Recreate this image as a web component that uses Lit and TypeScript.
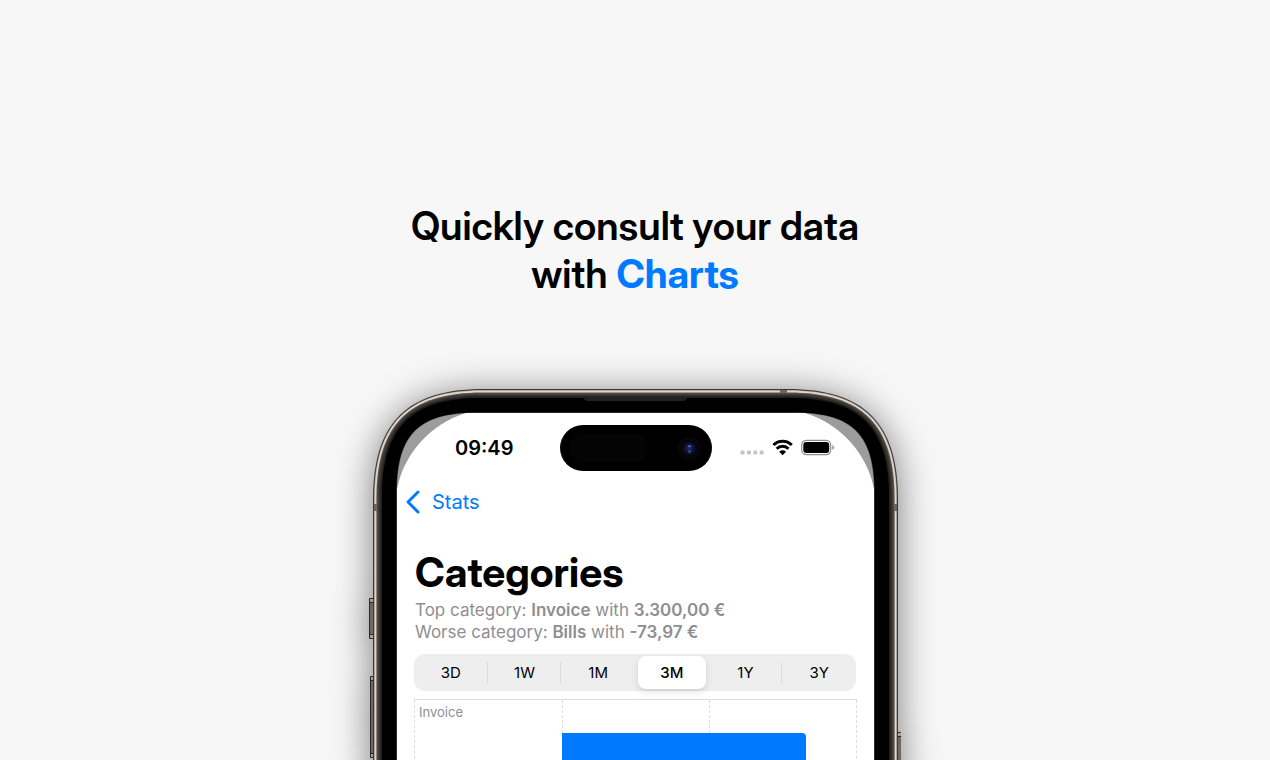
import { LitElement, html, svg, css } from "lit";
import { customElement, state, property } from "lit/decorators.js";
import { classMap } from "lit/directives/class-map.js";

const BODY_WIDTH = 526;
const BODY_HEIGHT = 1080;

/** Closed outline of the phone body, moved inwards by `inset`, with smooth corners. */
function outline(inset: number): string {
  const run = 110 - inset * 1.25;
  const pull = 34 - inset * 0.52;
  const l = 1 + inset;
  const r = BODY_WIDTH - inset;
  const t = inset;
  const b = BODY_HEIGHT - inset;
  return [
    `M${l} ${t + run}`,
    `C${l} ${t + pull} ${l + pull} ${t} ${l + run} ${t}`,
    `H${r - run}`,
    `C${r - pull} ${t} ${r} ${t + pull} ${r} ${t + run}`,
    `V${b - run}`,
    `C${r} ${b - pull} ${r - pull} ${b} ${r - run} ${b}`,
    `H${l + run}`,
    `C${l + pull} ${b} ${l} ${b - pull} ${l} ${b - run}`,
    "Z",
  ].join("");
}

@customElement("phone-frame")
class PhoneFrame extends LitElement {
  static styles = css`
    :host {
      display: block;
    }
    .body {
      display: block;
      overflow: visible;
      filter: drop-shadow(0 4px 18px rgba(0, 0, 0, 0.5));
    }
  `;

  private sideButton(x: number, y: number, width: number, height: number) {
    return svg`
      <rect x=${x} y=${y} width=${width} height=${height} rx="1" fill="#2b2825"/>
      <rect x=${x + 1} y=${y + 5} width=${width - 1} height=${height - 10} fill="#6d6861"/>
      <rect x=${x + 1} y=${y + 1} width=${width - 1} height="3" fill="#a8a097"/>
      <rect x=${x + 1} y=${y + height - 4} width=${width - 1} height="3" fill="#a8a097"/>
    `;
  }

  render() {
    return html`
      <svg class="body" width=${BODY_WIDTH} height=${BODY_HEIGHT} viewBox="0 0 ${BODY_WIDTH} ${BODY_HEIGHT}" aria-hidden="true">
        ${this.sideButton(-3, 209, 5, 41)}
        ${this.sideButton(-2, 287, 4, 82)}
        ${this.sideButton(-2, 388, 4, 82)}
        ${this.sideButton(525, 343, 4, 130)}
        <path d=${outline(0)} fill="#3d3935"/>
        <path d=${outline(1)} fill="#8d857d"/>
        <path d=${outline(1.6)} fill="#ddd5cc"/>
        <path d=${outline(3.4)} fill="#5c5650"/>
        <path d=${outline(4.4)} fill="#423e3a"/>
        <path d=${outline(6)} fill="#33302d"/>
        <path d=${outline(7.6)} fill="#201e1d"/>
        <path d=${outline(9)} fill="#000"/>
        <rect x="408" y="1" width="7" height="3" fill="#6b6660"/>
        <rect x="2" y="115" width="3" height="7" fill="#6b6660"/>
        <rect x="522" y="115" width="3" height="7" fill="#6b6660"/>
        <path d="M211 8H316L314 11Q313 12 311 12H216Q214 12 213 11Z" fill="#232221"/>
        <path d=${outline(23.4)} fill="#4d4d4d"/>
        <path d=${outline(24)} fill="#9c9c9c"/>
        <path d="M25 100A100 100 0 0 1 94 24H433A100 100 0 0 1 502 100V1056H25Z" fill="#fff"/>
      </svg>
    `;
  }
}

@customElement("status-bar")
class StatusBar extends LitElement {
  static styles = css`
    :host {
      display: grid;
      grid-template-columns: 1fr 152px 1fr;
      align-items: center;
      height: 46px;
    }
    .time {
      padding-left: 12px;
      text-align: center;
      font-size: 20px;
      font-weight: 600;
      line-height: 24px;
    }
    .island,
    .indicators {
      display: block;
    }
    .indicators {
      justify-self: center;
      margin-right: 10px;
    }
  `;

  render() {
    return html`
      <span class="time">09:49</span>
      <svg class="island" width="152" height="46" viewBox="0 0 152 46" aria-hidden="true">
        <defs>
          <radialGradient id="lens">
            <stop offset="0" stop-color="#1c2c6c"/>
            <stop offset="0.55" stop-color="#111542"/>
            <stop offset="1" stop-color="#0a0a1e"/>
          </radialGradient>
        </defs>
        <rect width="152" height="46" rx="23" fill="#000"/>
        <rect x="9" y="9" width="79" height="28" rx="14" fill="#040404"/>
        <circle cx="129.500" cy="23.500" r="12" fill="#07040a"/>
        <circle cx="129.500" cy="23.500" r="6.500" fill="url(#lens)"/>
        <ellipse cx="129.500" cy="21.300" rx="1.800" ry="1" fill="#5a62cc"/>
        <circle cx="129.500" cy="26.500" r="1.300" fill="#17708a"/>
      </svg>
      <svg class="indicators" width="95" height="18" viewBox="0 0 95 18" role="img" aria-label="No signal, Wi-Fi on, battery full">
        <g fill="#c6c6c7">
          <rect x="0.500" y="11.500" width="4" height="4" rx="1.200"/>
          <rect x="7" y="11.500" width="4" height="4" rx="1.200"/>
          <rect x="13.300" y="11.500" width="4" height="4" rx="1.200"/>
          <rect x="19.700" y="11.500" width="4" height="4" rx="1.200"/>
        </g>
        <g fill="none" stroke="#000" stroke-width="2.900">
          <path d="M33.400 6.100A12.800 12.800 0 0 1 51.800 6.100"/>
          <path d="M36.700 9.700A8.200 8.200 0 0 1 48.500 9.700"/>
        </g>
        <path d="M42.600 16.200L39.200 12.700Q42.600 10 46 12.700Z" fill="#000"/>
        <rect x="61.700" y="1.400" width="29" height="14.200" rx="4.600" fill="none" stroke="#8d8d8d" stroke-width="1.200"/>
        <rect x="63.300" y="3" width="25.900" height="11" rx="3" fill="#000"/>
        <path d="M92.300 6Q94.200 6.700 94.200 8.500T92.300 11Z" fill="#999"/>
      </svg>
    `;
  }
}

@customElement("range-picker")
class RangePicker extends LitElement {
  @property({ type: Array }) ranges: string[] = [];
  @state() private selected = "3M";

  static styles = css`
    .track {
      display: grid;
      grid-template-columns: repeat(6, 1fr);
      min-width: 0;
      margin: 0;
      padding: 2px 0;
      border: 0;
      border-radius: 11px;
      background: #eeeeee;
    }
    .option {
      display: flex;
      align-items: center;
      justify-content: center;
      height: 33px;
      font-size: 15px;
      font-weight: 400;
      cursor: pointer;
      background: linear-gradient(#dadada, #dadada) right center / 1px 21px no-repeat;
    }
    .plain {
      background: none;
    }
    .pill {
      flex: 1;
      margin: 0 3px;
      border-radius: 8px;
      line-height: 33px;
      text-align: center;
    }
    .chosen {
      background: #fff;
      font-weight: 500;
      box-shadow: 0 3px 8px rgba(0, 0, 0, 0.1), 0 2px 2px rgba(0, 0, 0, 0.04);
    }
    .radio {
      position: absolute;
      opacity: 0;
      pointer-events: none;
    }
  `;

  render() {
    const current = this.ranges.indexOf(this.selected);
    const last = this.ranges.length - 1;
    return html`
      <fieldset class="track" aria-label="Period">
        ${this.ranges.map(
          (range, i) => html`
            <label class=${classMap({ option: true, plain: i === last || i === current || i === current - 1 })}>
              <input
                class="radio"
                type="radio"
                name="range"
                .checked=${i === current}
                @change=${() => (this.selected = range)}
              />
              <span class=${classMap({ pill: true, chosen: i === current })}>${range}</span>
            </label>
          `,
        )}
      </fieldset>
    `;
  }
}

@customElement("category-chart")
class CategoryChart extends LitElement {
  static styles = css`
    .plot {
      display: grid;
      grid-template-columns: repeat(3, 1fr);
      border-top: 1px solid #dcdcdc;
      height: 380px;
    }
    .cell {
      grid-row: 1;
      border-left: 1px dashed #dedede;
    }
    .first {
      grid-column: 1;
    }
    .second {
      grid-column: 2;
    }
    .third {
      grid-column: 3;
      border-right: 1px dashed #dedede;
    }
    .series {
      grid-row: 1;
      grid-column: 1;
      padding: 4px 5px;
      font-size: 13px;
      line-height: 17px;
      color: #8e8e93;
    }
    .lane {
      grid-row: 1;
      grid-column: 2 / 4;
      padding-top: 33px;
    }
    .bar {
      height: 74px;
      border-radius: 0 4px 4px 0;
      background: #007aff;
    }
  `;

  render() {
    const share = 82.7;
    return html`
      <div class="plot">
        <div class="cell first"></div>
        <div class="cell second"></div>
        <div class="cell third"></div>
        <span class="series">Invoice</span>
        <div class="lane"><div class="bar" style="width:${share}%"></div></div>
      </div>
    `;
  }
}

@customElement("app-root")
class AppRoot extends LitElement {
  static styles = css`
    :host {
      display: block;
      height: 100vh;
      overflow: hidden;
      background: #f7f7f7;
      color: #000;
      font-family: Inter, "Liberation Sans", sans-serif;
    }
    .page {
      display: flex;
      flex-direction: column;
      align-items: center;
      gap: 91px;
      padding-top: 202px;
    }
    .headline {
      margin: 0;
      font-family: "Inter Display", Inter, sans-serif;
      font-size: 39px;
      font-weight: 600;
      line-height: 48px;
      text-align: center;
    }
    .accent {
      color: #007aff;
      font-weight: 700;
    }
    .phone {
      display: grid;
    }
    .frame,
    .screen {
      grid-area: 1 / 1;
    }
    .screen {
      z-index: 1;
      margin: 24px 24px 0 25px;
      padding-top: 12px;
    }
    .nav {
      display: flex;
      padding: 18px 8px 0;
    }
    .back {
      display: flex;
      align-items: center;
      gap: 12px;
      color: #007aff;
      font-size: 20px;
      line-height: 26px;
      text-decoration: none;
    }
    .content {
      padding: 32px 17px 0;
    }
    .title {
      margin: 0;
      padding-left: 1px;
      font-family: "Inter Display", Inter, sans-serif;
      font-size: 41px;
      font-weight: 700;
      line-height: 50px;
    }
    .facts {
      margin: 2px 0 11px;
      padding-left: 1px;
      font-size: 17px;
      line-height: 22px;
      color: #8e8e93;
    }
    .strong {
      font-weight: 600;
    }
    .ranges {
      display: block;
      margin-right: 1px;
    }
    .chart {
      display: block;
      margin-top: 8px;
    }
  `;

  render() {
    return html`
      <main class="page">
        <h1 class="headline">
          Quickly consult your data<br />with <span class="accent">Charts</span>
        </h1>
        <section class="phone">
          <phone-frame class="frame"></phone-frame>
          <div class="screen">
            <status-bar></status-bar>
            <nav class="nav">
              <a class="back" href="#stats">
                <svg width="15" height="26" viewBox="0 0 15 26" aria-hidden="true">
                  <path d="M13 3L3 13L13 23" fill="none" stroke="#007aff" stroke-width="2.900" stroke-linecap="round" stroke-linejoin="round"/>
                </svg>
                Stats
              </a>
            </nav>
            <div class="content">
              <h2 class="title">Categories</h2>
              <p class="facts">
                Top category: <b class="strong">Invoice</b> with <b class="strong">3.300,00 €</b><br />
                Worse category: <b class="strong">Bills</b> with <b class="strong">-73,97 €</b>
              </p>
              <range-picker class="ranges" .ranges=${["3D", "1W", "1M", "3M", "1Y", "3Y"]}></range-picker>
              <category-chart class="chart"></category-chart>
            </div>
          </div>
        </section>
      </main>
    `;
  }
}
